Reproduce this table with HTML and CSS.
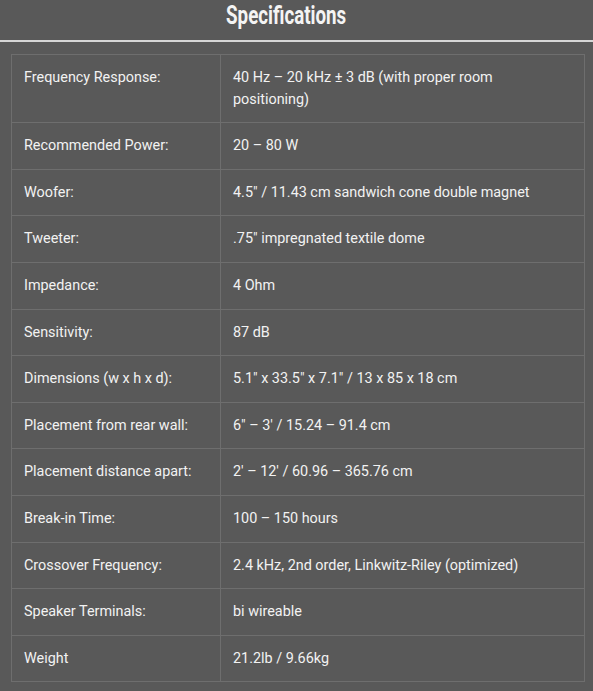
FILE: index.html
```
<!DOCTYPE html>
<html>
<head>
<meta charset="utf-8">
<link rel="stylesheet" href="styles.css">
</head>
<body>
<div class="page">
  <header class="head"><h2 class="title"><span>Specifications</span></h2></header>
  <table class="specs">
    <tr><td class="k">Frequency Response:</td><td class="v">40 Hz – 20 kHz ± 3 dB (with proper room positioning)</td></tr>
    <tr><td class="k">Recommended Power:</td><td class="v">20 – 80 W</td></tr>
    <tr><td class="k">Woofer:</td><td class="v">4.5" / 11.43 cm sandwich cone double magnet</td></tr>
    <tr><td class="k">Tweeter:</td><td class="v">.75" impregnated textile dome</td></tr>
    <tr><td class="k">Impedance:</td><td class="v">4 Ohm</td></tr>
    <tr><td class="k">Sensitivity:</td><td class="v">87 dB</td></tr>
    <tr><td class="k">Dimensions (w x h x d):</td><td class="v">5.1" x 33.5" x 7.1" / 13 x 85 x 18 cm</td></tr>
    <tr><td class="k">Placement from rear wall:</td><td class="v">6" – 3' / 15.24 – 91.4 cm</td></tr>
    <tr><td class="k">Placement distance apart:</td><td class="v">2' – 12' / 60.96 – 365.76 cm</td></tr>
    <tr><td class="k">Break-in Time:</td><td class="v">100 – 150 hours</td></tr>
    <tr><td class="k">Crossover Frequency:</td><td class="v">2.4 kHz, 2nd order, Linkwitz-Riley (optimized)</td></tr>
    <tr><td class="k">Speaker Terminals:</td><td class="v">bi wireable</td></tr>
    <tr><td class="k">Weight</td><td class="v">21.2lb / 9.66kg</td></tr>
  </table>
</div>
</body>
</html>
```
FILE: styles.css
```
html, body {
  margin: 0;
  padding: 0;
  background: #595959;
}
.page {
  font-family: Roboto, "Liberation Sans", sans-serif;
  color: #f2f2f2;
  min-height: 691px;
}
.head {
  height: 40px;
  border-bottom: 2px solid #d6d6d6;
  display: flex;
  justify-content: center;
  align-items: flex-start;
  padding-right: 20px;
}
.title {
  margin: 0;
  font-size: 25px;
  font-weight: 700;
  line-height: 32px;
  color: #f4f4f4;
}
.title span {
  display: inline-block;
  transform: scaleX(0.75);
  transform-origin: center;
}
.specs {
  margin: 12px 8px 0 11px;
  width: 574px;
  border-collapse: collapse;
  border: 1px solid #6e6e6e;
  font-size: 14.4px;
  line-height: 21.6px;
}
.specs td {
  border: 1px solid #6e6e6e;
  padding: 12px 12px;
  vertical-align: top;
}
.specs .k {
  width: 184px;
}
```
